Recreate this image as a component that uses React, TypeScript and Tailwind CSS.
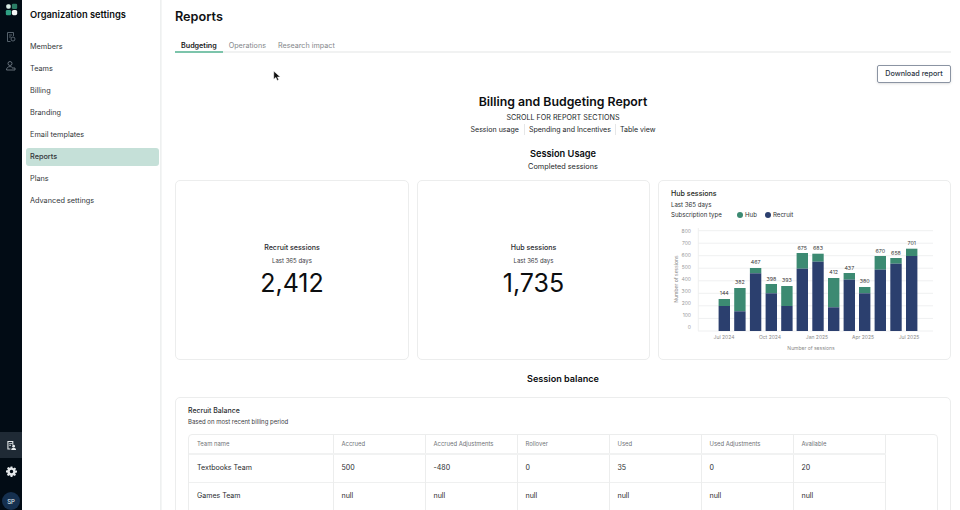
import React from 'react'

const navItems = ['Members', 'Teams', 'Billing', 'Branding', 'Email templates', 'Reports', 'Plans', 'Advanced settings']

const bars = [
  { x: 724.3, recruit: 306, hub: 299, label: '144', ly: 293 },
  { x: 739.9, recruit: 311.3, hub: 288, label: '382', ly: 282 },
  { x: 755.6, recruit: 273.3, hub: 268, label: '467', ly: 262 },
  { x: 771.3, recruit: 293.3, hub: 284, label: '398', ly: 278.5 },
  { x: 786.9, recruit: 306, hub: 286, label: '393', ly: 280 },
  { x: 802.3, recruit: 268.7, hub: 253, label: '675', ly: 247.5 },
  { x: 818, recruit: 261.7, hub: 253.7, label: '683', ly: 248 },
  { x: 833.7, recruit: 307.3, hub: 278, label: '412', ly: 272 },
  { x: 849.3, recruit: 279.7, hub: 273, label: '437', ly: 267.5 },
  { x: 864.7, recruit: 293.3, hub: 287, label: '380', ly: 281 },
  { x: 880.3, recruit: 269.7, hub: 256, label: '670', ly: 250.5 },
  { x: 896, recruit: 263.7, hub: 258, label: '658', ly: 253 },
  { x: 911.7, recruit: 256, hub: 248.7, label: '701', ly: 243 },
]

const gridLines = [230.7, 243.2, 255.7, 268.2, 280.8, 293.3, 305.8, 318.4, 331]
const yLabels = ['800', '700', '600', '500', '400', '300', '200', '100', '0']
const xLabels = [
  { x: 724, label: 'Jul 2024' },
  { x: 770, label: 'Oct 2024' },
  { x: 817, label: 'Jan 2025' },
  { x: 863, label: 'Apr 2025' },
  { x: 909, label: 'Jul 2025' },
]

const columns = ['Accrued', 'Accrued Adjustments', 'Rollover', 'Used', 'Used Adjustments', 'Available']
const rows = [
  { team: 'Textbooks Team', values: ['500', '-480', '0', '35', '0', '20'] },
  { team: 'Games Team', values: ['null', 'null', 'null', 'null', 'null', 'null'] },
]

function HubChart() {
  return (
    <svg viewBox="660 222 292 132" className="absolute left-[1px] top-[41px] w-[292px] h-[132px]" style={{ fontFamily: 'Inter, sans-serif' }}>
      {gridLines.map((y) => (
        <line key={y} x1="698" x2="933" y1={y} y2={y} stroke="#eff0f1" strokeWidth="1" />
      ))}
      <line x1="698.3" x2="698.3" y1="228" y2="331" stroke="#eff0f1" strokeWidth="1" />
      {yLabels.map((label, i) => (
        <text key={label} x="691" y={232.6 + i * 12.1} textAnchor="end" fontSize="5" fill="#9a9a9a">
          {label}
        </text>
      ))}
      {bars.map((b) => (
        <g key={b.x}>
          <rect x={b.x - 5.7} y={b.hub} width="11.4" height={b.recruit - b.hub} fill="#3c8a72" />
          <rect x={b.x - 5.7} y={b.recruit} width="11.4" height={331 - b.recruit} fill="#2b3f6e" />
          <text x={b.x} y={b.ly + 2} textAnchor="middle" fontSize="5.3" fill="#3a3a3a">
            {b.label}
          </text>
        </g>
      ))}
      {xLabels.map((l) => (
        <text key={l.label} x={l.x} y="339" textAnchor="middle" fontSize="5" fill="#8a8a8a">
          {l.label}
        </text>
      ))}
      <text x="811" y="349.5" textAnchor="middle" fontSize="5" fill="#8a8a8a">
        Number of sessions
      </text>
      <text transform="translate(677.5 279) rotate(-90)" textAnchor="middle" fontSize="5" fill="#8a8a8a">
        Number of sessions
      </text>
    </svg>
  )
}

function StatCard({ title, value, className }: { title: string; value: string; className: string }) {
  return (
    <div className={`h-[180px] rounded-[5px] border border-[#eceded] flex flex-col items-center pt-[61px] ${className}`}>
      <div className="text-[7.1px] leading-[12px] font-medium text-[#2a2c2f]">{title}</div>
      <div className="text-[6px] leading-[10px] mt-[2px] text-[#3a3c3f]">Last 365 days</div>
      <div className="text-[25px] leading-[34px] text-[#0c0e10]">{value}</div>
    </div>
  )
}

export default function App() {
  return (
    <div className="relative w-[960px] h-[510px] overflow-hidden flex bg-white font-['Inter',sans-serif]">
      <aside className="w-[22px] shrink-0 bg-[#020c15] flex flex-col items-center">
        <svg viewBox="0 0 16 16" className="w-[13px] h-[13px] mt-[3px]">
          <rect x="1.500" y="1.500" width="5.500" height="5.500" rx="2" fill="#d8ece5" />
          <rect x="8.500" y="1" width="6.500" height="6.500" rx="1.600" fill="#2a7d66" />
          <rect x="1" y="8.500" width="6.500" height="6.500" rx="1.600" fill="#2fa083" />
          <rect x="8.500" y="8.500" width="6.500" height="6.500" rx="2" fill="#f4f7f6" />
        </svg>
        <svg viewBox="0 0 12 12" className="w-[12px] h-[12px] mt-[15px]" fill="none" stroke="#5f6b75" strokeWidth="0.9">
          <path d="M8.500 5V1.500h-6v9h3" />
          <path d="M4 4h3M4 6h2" />
          <circle cx="8" cy="8" r="2" />
        </svg>
        <svg viewBox="0 0 12 12" className="w-[12px] h-[12px] mt-[17px]" fill="none" stroke="#6f7a84" strokeWidth="0.9">
          <circle cx="5" cy="3.500" r="2" />
          <path d="M1.500 10c0-2.200 1.500-3.400 3.500-3.400 1 0 1.700.3 2.300.8" />
          <path d="M1.500 10h8.500V8H7" />
        </svg>
        <div className="mt-auto w-full h-[26px] bg-[#1f2a35] flex items-center justify-center">
          <svg viewBox="0 0 12 12" className="w-[11px] h-[11px]" fill="#e6eaec">
            <path d="M1.500 1h6.500v4.200H6.800V2.200H2.700v7h2.100V10.400H1.500z" />
            <path d="M3.500 3.500h3.200v.9H3.500zM3.500 5.300h2v.9h-2z" />
            <circle cx="8.300" cy="6.700" r="1.500" />
            <path d="M5.700 11c0-1.600 1.200-2.500 2.600-2.500s2.700.9 2.700 2.500z" />
          </svg>
        </div>
        <svg viewBox="0 0 24 24" className="w-[11px] h-[11px] mt-[7.500px] shrink-0" fill="#e4e8ea">
          <path
            fillRule="evenodd"
            d="M10 1h4l.6 3.200 1.900.8 2.700-1.800 2.800 2.800-1.800 2.700.8 1.900L24 10v4l-3.200.6-.8 1.900 1.800 2.700-2.800 2.800-2.700-1.800-1.900.8L14 24h-4l-.6-3.200-1.900-.8-2.700 1.800-2.800-2.800 1.800-2.700-.8-1.900L0 14v-4l3.200-.6.800-1.900L2.200 4.800 5 2l2.700 1.800 1.900-.8zM12 8.200a3.800 3.800 0 1 0 0 7.600 3.800 3.800 0 0 0 0-7.600z"
          />
        </svg>
        <div className="mt-[15.500px] w-[18px] h-[18px] shrink-0 rounded-full bg-[#15304f] flex items-center justify-center text-[6px] font-medium text-[#dfe5ea]">
          SP
        </div>
      </aside>

      <nav className="w-[139px] shrink-0 border-r border-[#eef0f0] pl-[4px] pr-[1px]">
        <h2 className="pl-[4px] mt-[8px] text-[9.300px] leading-[14px] font-semibold text-[#0d0f11]">Organization settings</h2>
        <ul className="mt-[16px] flex flex-col gap-[4.100px]">
          {navItems.map((item) => (
            <li
              key={item}
              className={`h-[18px] rounded-[3px] pl-[4px] flex items-center text-[7.300px] text-[#33363a] ${item === 'Reports' ? 'bg-[#c5e0d8] font-medium' : ''}`}
            >
              {item}
            </li>
          ))}
        </ul>
      </nav>

      <main className="flex-1 min-w-0 border-l border-[#f4f5f5] pl-[13px] pr-[9px]">
        <h1 className="mt-[8px] text-[12.700px] leading-[18px] font-semibold text-[#101214]">Reports</h1>
        <div className="mt-[13px] flex h-[14px] border-b-2 border-[#f1f2f2] text-[7.200px]">
          <div className="h-[14px] px-[6px] border-b-2 border-[#7cc4ab] font-semibold text-[#17191b] leading-[13px]">Budgeting</div>
          <div className="px-[6px] text-[#84878a] leading-[13px]">Operations</div>
          <div className="px-[6px] text-[#84878a] leading-[13px]">Research impact</div>
        </div>

        <div className="mt-[12px] flex justify-end">
          <button className="w-[74px] h-[18px] rounded-[2px] border border-[#8b94a3] text-[7.200px] font-medium text-[#2a3442] shadow-sm">
            Download report
          </button>
        </div>

        <div className="mt-[10px] flex flex-col items-center">
          <div className="text-[12.300px] leading-[18px] font-semibold text-[#0c0e10]">Billing and Budgeting Report</div>
          <div className="mt-[1px] text-[7.200px] leading-[11px] text-[#24272a]">SCROLL FOR REPORT SECTIONS</div>
          <div className="mt-[1px] flex items-center text-[7.050px] leading-[11px] text-[#24272a]">
            <span className="pr-[5px] border-r border-[#e6e7e8]">Session usage</span>
            <span className="px-[4px] border-r border-[#e6e7e8]">Spending and Incentives</span>
            <span className="pl-[4px]">Table view</span>
          </div>
          <div className="mt-[12px] text-[9.250px] leading-[14px] font-semibold text-[#0c0e10]">Session Usage</div>
          <div className="text-[7.300px] leading-[11px] text-[#24272a]">Completed sessions</div>
        </div>

        <div className="mt-[8px] flex gap-[8px]">
          <StatCard title="Recruit sessions" value="2,412" className="w-[234px]" />
          <StatCard title="Hub sessions" value="1,735" className="w-[233px]" />
          <div className="relative w-[293px] h-[180px] rounded-[5px] border border-[#eceded] pl-[12px] pt-[7px]">
            <div className="text-[7.100px] leading-[11px] font-medium text-[#1d1f21]">Hub sessions</div>
            <div className="mt-[1px] text-[6.100px] leading-[9px] text-[#2d3033]">Last 365 days</div>
            <div className="flex items-center text-[6.100px] leading-[11px] text-[#2d3033]">
              <span className="w-[66px] shrink-0">Subscription type</span>
              <span className="w-[6px] h-[6px] shrink-0 rounded-full bg-[#3c8a72] mr-[2px]" />
              <span className="w-[20px] shrink-0">Hub</span>
              <span className="w-[6px] h-[6px] shrink-0 rounded-full bg-[#2b3f6e] mr-[2px]" />
              <span>Recruit</span>
            </div>
            <HubChart />
          </div>
        </div>

        <div className="mt-[12px] text-center text-[9.100px] leading-[14px] font-semibold text-[#0c0e10]">Session balance</div>

        <div className="mt-[11px] rounded-t-[5px] border border-[#eceded] pl-[12px] pr-[12px] pt-[7px] h-[120px]">
          <div className="text-[6.950px] leading-[11px] font-medium text-[#2a2c2f]">Recruit Balance</div>
          <div className="mt-[1px] text-[6px] leading-[10px] text-[#3a3c3f]">Based on most recent billing period</div>
          <div className="mt-[7px] rounded-t-[4px] border border-[#eceded] h-[90px]">
            <table className="table-fixed border-collapse w-[696px]">
              <thead>
                <tr className="h-[19px] border-b-2 border-[#f1f2f2]">
                  <th className="w-[144px] pl-[8px] text-left text-[5.900px] font-normal text-[#707377]">Team name</th>
                  {columns.map((c) => (
                    <th key={c} className="w-[92px] pl-[8px] text-left text-[5.900px] font-normal text-[#707377] border-l border-r border-[#eceded]">
                      {c}
                    </th>
                  ))}
                </tr>
              </thead>
              <tbody>
                {rows.map((row) => (
                  <tr key={row.team} className="h-[28px] border-b border-[#eff0f0]">
                    <td className="pl-[8px] pt-[1px] text-[7.050px] text-[#2a2c2f]">{row.team}</td>
                    {row.values.map((v, i) => (
                      <td key={i} className="pl-[8px] pt-[1px] text-[7.050px] text-[#2a2c2f] border-l border-r border-[#eceded]">
                        {v}
                      </td>
                    ))}
                  </tr>
                ))}
              </tbody>
            </table>
          </div>
        </div>
      </main>

      <svg viewBox="0 0 10 14" className="absolute left-[273px] top-[70px] w-[8px] h-[12px]">
        <path d="M1 1v10l2.600-2.300 1.700 3.800 1.800-.8-1.700-3.600H9z" fill="#101010" stroke="#fff" strokeWidth="0.5" />
      </svg>
    </div>
  )
}
